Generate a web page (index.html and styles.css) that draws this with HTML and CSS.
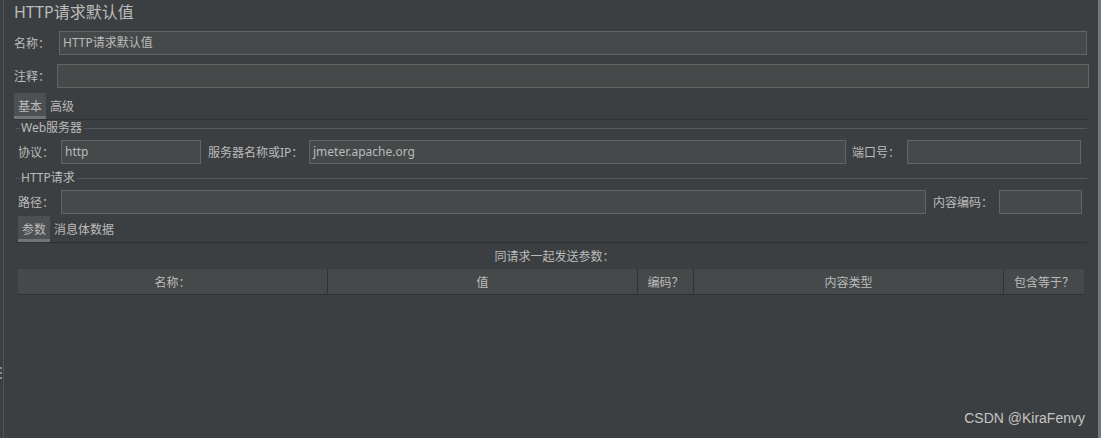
FILE: index.html
```html
<!DOCTYPE html>
<html lang="zh">
<head>
<meta charset="utf-8">
<title>HTTP请求默认值</title>
<link rel="stylesheet" href="styles.css">
</head>
<body>
<div class="gutter">
  <div class="grip"><i></i><i></i><i></i></div>
</div>
<div class="panel">
  <div class="title">HTTP请求默认值</div>

  <div class="row row-name">
    <label class="lbl w45">名称：</label>
    <div class="field grow">HTTP请求默认值</div>
  </div>
  <div class="row row-comment">
    <label class="lbl w43">注释：</label>
    <div class="field grow"></div>
  </div>

  <div class="tabs tabs-main">
    <div class="tab active">基本</div>
    <div class="tab">高级</div>
  </div>

  <div class="group">
    <div class="legend"><span class="stub"></span><span class="legend-text">Web服务器</span><span class="rule"></span></div>
    <div class="row row-web">
      <label class="lbl w43">协议：</label>
      <div class="field proto">http</div>
      <label class="lbl server-lbl">服务器名称或IP：</label>
      <div class="field grow">jmeter.apache.org</div>
      <label class="lbl port-lbl">端口号：</label>
      <div class="field port"></div>
    </div>

    <div class="legend legend-http"><span class="stub"></span><span class="legend-text">HTTP请求</span><span class="rule"></span></div>
    <div class="row row-path">
      <label class="lbl w43">路径：</label>
      <div class="field grow"></div>
      <label class="lbl enc-lbl">内容编码：</label>
      <div class="field enc"></div>
    </div>

    <div class="tabs tabs-sub">
      <div class="tab active">参数</div>
      <div class="tab">消息体数据</div>
    </div>
  </div>

  <div class="caption">同请求一起发送参数：</div>
  <div class="table-head">
    <div class="th">名称：</div>
    <div class="th">值</div>
    <div class="th">编码？</div>
    <div class="th">内容类型</div>
    <div class="th">包含等于？</div>
  </div>

  <div class="watermark">CSDN @KiraFenvy</div>
</div>
</body>
</html>
```

FILE: styles.css
```css
* { box-sizing: border-box; }

body {
  margin: 0;
  width: 1101px;
  height: 438px;
  overflow: hidden;
  display: flex;
  background: #3c3f41;
  color: #bbbbbb;
  font-family: "Noto Sans", "Noto Sans CJK SC", sans-serif;
  font-size: 12px;
}

.gutter {
  width: 3px;
  flex: none;
}
.grip {
  margin-top: 367px;
  display: flex;
  flex-direction: column;
  gap: 3px;
}
.grip i {
  display: block;
  width: 2px;
  height: 2px;
  background: #888b8e;
}

.panel {
  position: relative;
  flex: 1;
  border-left: 1px solid #505356;
  border-right: 3px solid #74777a;
  padding: 0 9px 0 10px;
}

.title {
  height: 24px;
  line-height: 24px;
  font-size: 16px;
  color: #bbbbbb;
}

.row {
  display: flex;
  align-items: center;
  height: 24px;
}
.row-name { margin-top: 7px; margin-right: 2px; }
.row-comment { margin-top: 9px; }

.lbl {
  flex: none;
  white-space: nowrap;
  line-height: 16px;
  padding-top: 1px;
}
.w45 { width: 45px; }
.w43 { width: 43px; }

.field {
  height: 24px;
  line-height: 22px;
  padding: 0 3px;
  background: #45494a;
  border: 1px solid #646464;
  color: #bbbbbb;
  white-space: nowrap;
  overflow: hidden;
}
.grow { flex: 1; }

.tabs {
  display: flex;
  height: 27px;
  border-bottom: 1px solid #2f3234;
}
.tabs-main { margin-top: 5px; }
.tab {
  height: 26px;
  line-height: 27px;
  padding: 0 4px;
}
.tab.active {
  background: #4c5052;
  box-shadow: inset 0 -3px 0 #717477;
}

.group {
  margin: 0 2px 0 2px;
}

.legend {
  display: flex;
  align-items: center;
  height: 16px;
}
.legend-http { margin-top: 6px; }
.stub {
  width: 4px;
  height: 1px;
  background: #55595b;
  flex: none;
}
.legend-text {
  padding: 0 2px 0 1px;
  line-height: 16px;
}
.rule {
  flex: 1;
  height: 1px;
  background: #55595b;
}

.row-web {
  margin-top: 4px;
  padding-left: 2px;
  padding-right: 6px;
}
.proto { width: 140px; }
.server-lbl { margin-left: 7px; width: 101px; }
.port-lbl { margin-left: 6px; width: 55px; }
.port { width: 174px; }

.row-path {
  margin-top: 4px;
  padding-left: 2px;
  padding-right: 5px;
}
.enc-lbl { margin-left: 7px; width: 66px; }
.enc { width: 83px; }

.tabs-sub {
  margin-top: 2px;
  padding-left: 2px;
}

.caption {
  height: 26px;
  line-height: 28px;
  text-align: center;
  padding-left: 6px;
}

.table-head {
  margin-left: 4px;
  display: grid;
  grid-template-columns: 309px 309px 55px 309px 80px;
  column-gap: 1px;
  width: 1066px;
  background: #303234;
  border-bottom: 1px solid #303234;
}
.th {
  height: 25px;
  line-height: 27px;
  text-align: center;
  background: #45494a;
  white-space: nowrap;
}

.watermark {
  position: absolute;
  right: 13px;
  top: 410px;
  font-family: "Liberation Sans", Arial, sans-serif;
  font-size: 14px;
  color: #c4c4c4;
}
```
